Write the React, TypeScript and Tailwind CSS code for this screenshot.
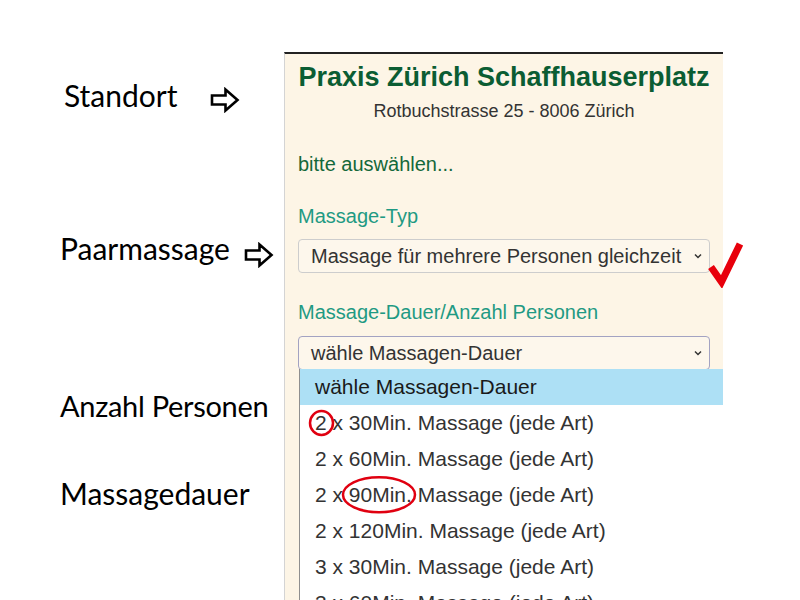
import React from "react";

const options = [
  "wähle Massagen-Dauer",
  "2 x 30Min. Massage (jede Art)",
  "2 x 60Min. Massage (jede Art)",
  "2 x 90Min. Massage (jede Art)",
  "2 x 120Min. Massage (jede Art)",
  "3 x 30Min. Massage (jede Art)",
  "3 x 60Min. Massage (jede Art)",
];

const Arrow = () => (
  <svg width="30" height="26" viewBox="0 0 30 26" fill="none">
    <path
      d="M2 8.5 H15.5 V2.5 L27.5 13 L15.5 23.5 V17.5 H2 Z"
      stroke="#000"
      strokeWidth="2.6"
      strokeLinejoin="miter"
    />
  </svg>
);

const Chevron = () => (
  <svg width="8" height="6" viewBox="0 0 8 6" fill="none">
    <path d="M1 1.5 L4 4.5 L7 1.5" stroke="#333" strokeWidth="1.5" />
  </svg>
);

const App = () => {
  return (
    <div
      className="w-[800px] h-[600px] bg-white flex overflow-hidden"
      style={{ fontFamily: "'Liberation Sans', Arial, sans-serif" }}
    >
      {/* Beschriftungen links */}
      <div
        className="w-[284px] shrink-0 flex flex-col text-[30px] leading-[35px] text-black"
        style={{ fontFamily: "Lato, 'Open Sans', sans-serif" }}
      >
        <div className="mt-[78px] pl-[64px] flex items-start">
          <span className="w-[146px]">Standort</span>
          <div className="mt-[9px]">
            <Arrow />
          </div>
        </div>
        <div className="mt-[118px] pl-[60px] flex items-start">
          <span className="w-[184px]">Paarmassage</span>
          <div className="mt-[11px]">
            <Arrow />
          </div>
        </div>
        <div className="mt-[120px] pl-[60px] text-[29px] tracking-[-0.3px]">Anzahl Personen</div>
        <div className="mt-[53px] pl-[60px]">Massagedauer</div>
      </div>

      {/* Buchungsformular */}
      <div className="w-[439px] shrink-0 mt-[52px] h-[548px] bg-[#fdf5e6] border-t-2 border-t-[#222] border-l border-l-[#d4d4d4] flex flex-col">
        <h1 className="pt-[8px] text-center text-[27px] leading-[31px] font-bold text-[#0b5d33]">
          Praxis Zürich Schaffhauserplatz
        </h1>
        <p className="mt-[8px] text-center text-[18px] leading-[21px] text-[#333]">
          Rotbuchstrasse 25 - 8006 Zürich
        </p>

        <div className="pl-[13px] flex flex-col">
          <p className="mt-[31px] text-[20px] leading-[23px] text-[#14683a]">
            bitte auswählen...
          </p>

          <p className="mt-[29px] text-[20px] leading-[23px] text-[#1f9a83]">
            Massage-Typ
          </p>
          <div className="relative mt-[11px] w-[412px]">
            <div className="h-[34px] rounded-[4px] border border-[#cdcdcd] bg-[#fdf7ec] flex items-center justify-between pl-[12px] pr-[7px] text-[20px] text-[#333]">
              <span>Massage für mehrere Personen gleichzeit</span>
              <Chevron />
            </div>
            <svg
              className="absolute left-[409px] top-[-1px]"
              width="38"
              height="50"
              viewBox="0 0 38 50"
              fill="none"
            >
              <path
                d="M4 29 L14.5 44 L33 6"
                stroke="#e8000b"
                strokeWidth="7"
                strokeLinejoin="miter"
              />
            </svg>
          </div>

          <p className="mt-[28px] text-[20px] leading-[23px] text-[#1f9a83]">
            Massage-Dauer/Anzahl Personen
          </p>
          <div className="mt-[12px] w-[412px] h-[34px] rounded-[4px] border border-[#a3a3c2] bg-[#fdf7ec] flex items-center justify-between pl-[12px] pr-[7px] text-[20px] text-[#333]">
            <span>wähle Massagen-Dauer</span>
            <Chevron />
          </div>

          {/* geöffnete Auswahlliste */}
          <div className="-mt-[1px] ml-[1px] border-l border-l-[#8f8f8f] bg-white flex flex-col text-[21px] text-[#333]">
            {options.map((option, index) => (
              <div
                key={option}
                className={
                  index === 0
                    ? "relative h-[36px] pl-[15px] flex items-center bg-[#ade0f5] text-[#1a1a1a]"
                    : "relative h-[36px] pl-[15px] flex items-center"
                }
              >
                {option}
                {index === 1 && (
                  <svg
                    className="absolute left-[8px] top-[4px]"
                    width="28"
                    height="28"
                    viewBox="0 0 28 28"
                    fill="none"
                  >
                    <ellipse cx="13.5" cy="14" rx="11.5" ry="12" stroke="#e00010" strokeWidth="2.5" />
                  </svg>
                )}
                {index === 3 && (
                  <svg
                    className="absolute left-[40px] top-[-2px]"
                    width="80"
                    height="42"
                    viewBox="0 0 80 42"
                    fill="none"
                  >
                    <ellipse cx="39" cy="19.7" rx="36" ry="17.5" stroke="#e00010" strokeWidth="2.5" />
                  </svg>
                )}
              </div>
            ))}
          </div>
        </div>
      </div>

      <div className="flex-1 bg-white" />
    </div>
  );
};

export default App;
